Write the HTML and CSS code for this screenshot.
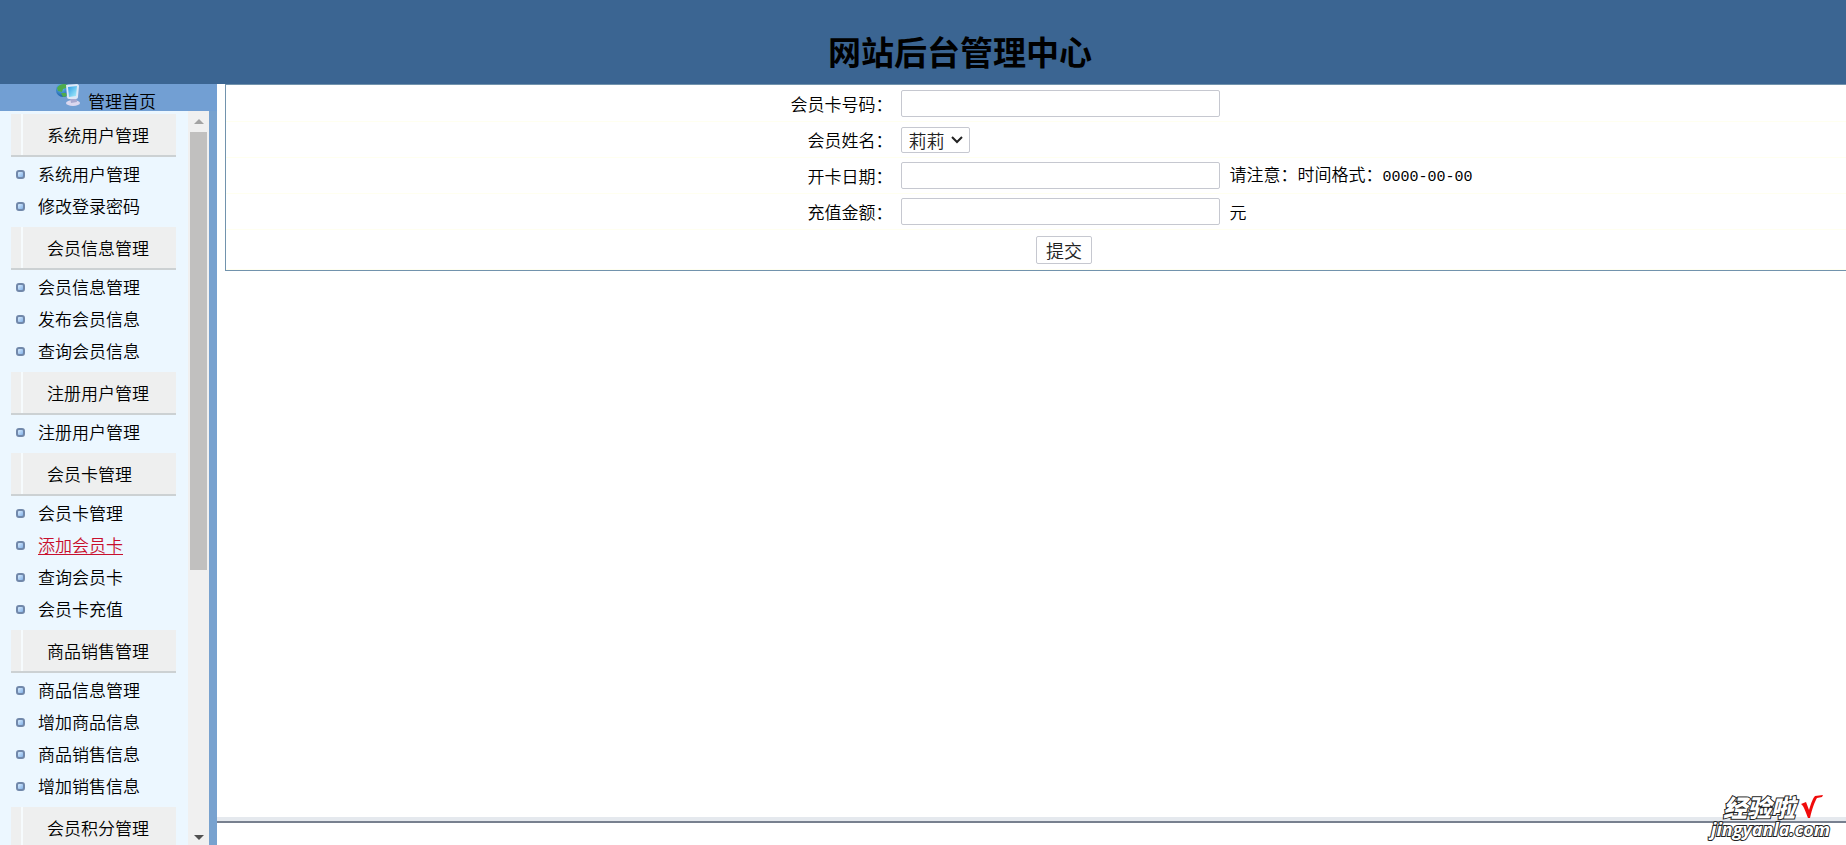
FILE: index.html
```html
<!DOCTYPE html>
<html lang="zh-CN">
<head>
<meta charset="utf-8">
<title>网站后台管理中心</title>
<link rel="stylesheet" href="styles.css">
</head>
<body>
<header class="banner"><h1>网站后台管理中心</h1></header>
<div class="frames">
  <aside class="sidebar">
    <a class="home" href="#">
      <svg class="home-icon" width="24" height="24" viewBox="0 0 24 24" aria-hidden="true">
        <defs>
          <linearGradient id="screen" x1="0" y1="0" x2="1" y2="1"><stop offset="0" stop-color="#2f9de6"/><stop offset="1" stop-color="#a8f0fb"/></linearGradient>
          <radialGradient id="globe" cx="0.4" cy="0.3" r="0.8"><stop offset="0" stop-color="#6fc5f5"/><stop offset="1" stop-color="#0d4f9e"/></radialGradient>
        </defs>
        <ellipse cx="17" cy="19" rx="7" ry="3" fill="#dcd8ef"/>
        <path d="M14 14l6-1 1 5-6 1z" fill="#a9a9cf"/>
        <circle cx="7" cy="6" r="7" fill="url(#globe)"/>
        <path d="M1 4c2-4 7-5 11-3l-2 3-3 1-1 3-4-1zM5 9l5 0 1 3-4 1z" fill="#4fab4c"/>
        <path d="M10 1l11-1c1 0 2 1 2 2l-1 11c0 1-1 2-2 2l-7 0c-1 0-2-1-2-2z" fill="#dce8f7"/>
        <path d="M12 3l9-1-1 10-7 1z" fill="url(#screen)"/>
      </svg>
      <span>管理首页</span>
    </a>
    <div class="scroll-area">
      <nav class="menu">
        <section><h2>系统用户管理</h2>
          <ul><li><a href="#">系统用户管理</a></li><li><a href="#">修改登录密码</a></li></ul></section>
        <section><h2>会员信息管理</h2>
          <ul><li><a href="#">会员信息管理</a></li><li><a href="#">发布会员信息</a></li><li><a href="#">查询会员信息</a></li></ul></section>
        <section><h2>注册用户管理</h2>
          <ul><li><a href="#">注册用户管理</a></li></ul></section>
        <section><h2>会员卡管理</h2>
          <ul><li><a href="#">会员卡管理</a></li><li><a class="active" href="#">添加会员卡</a></li><li><a href="#">查询会员卡</a></li><li><a href="#">会员卡充值</a></li></ul></section>
        <section><h2>商品销售管理</h2>
          <ul><li><a href="#">商品信息管理</a></li><li><a href="#">增加商品信息</a></li><li><a href="#">商品销售信息</a></li><li><a href="#">增加销售信息</a></li></ul></section>
        <section><h2>会员积分管理</h2></section>
      </nav>
      <div class="scrollbar" aria-hidden="true">
        <svg width="10" height="5" viewBox="0 0 10 5"><path d="M0 5L5 0l5 5z" fill="#a3a3a3"/></svg>
        <div class="track"><div class="thumb"></div></div>
        <svg width="10" height="5" viewBox="0 0 10 5"><path d="M0 0h10L5 5z" fill="#505050"/></svg>
      </div>
    </div>
  </aside>
  <main class="content">
    <form class="card-form">
      <div class="row"><label for="card-no">会员卡号码：</label><div class="field"><input id="card-no" type="text"></div></div>
      <div class="row"><label for="member">会员姓名：</label><div class="field"><div class="select-box"><select id="member"><option>莉莉</option></select><svg class="chevron" width="12" height="8" viewBox="0 0 12 8" aria-hidden="true"><path d="M1 1l5 5 5-5" fill="none" stroke="#222" stroke-width="2"/></svg></div></div></div>
      <div class="row"><label for="open-date">开卡日期：</label><div class="field"><input id="open-date" type="text"><span>请注意：时间格式：<span class="format">0000-00-00</span></span></div></div>
      <div class="row"><label for="amount">充值金额：</label><div class="field"><input id="amount" type="text"><span>元</span></div></div>
      <div class="row actions"><button type="submit">提交</button></div>
    </form>
    <div class="bottom-frame"></div>
  </main>
</div>
<div class="watermark">
  <div class="brand"><span>经验啦</span><svg width="24" height="24" viewBox="0 0 24 24" aria-hidden="true"><path d="M1 9l5-2 3 8C11 8 13 3 15 1l8-1-1 2-5 1C15 6 12 14 10 23L8 23C6 18 4 11 1 9z" fill="#f00b0b"/></svg></div>
  <div class="site">jingyanla.com</div>
</div>
</body>
</html>
```
FILE: styles.css
```css
*, *::before { box-sizing: border-box; }

body {
  margin: 0;
  height: 100vh;
  display: flex;
  flex-direction: column;
  overflow: hidden;
  background: #fff;
  color: #000;
  font: 350 17px/24px "Noto Sans CJK SC", sans-serif;
}

a { color: inherit; text-decoration: none; }

.banner {
  flex: none;
  height: 84px;
  padding: 27px 0 0 74px;
  background: #3b6592;
  text-align: center;
}

.banner h1 { margin: 0; font-size: 33px; line-height: 48px; font-weight: 700; }

.frames { flex: 1; min-height: 0; display: flex; }

.sidebar {
  flex: none;
  width: 217px;
  display: flex;
  flex-direction: column;
  border-right: 8px solid #78a2cf;
  background: #ecf7ff;
}

.home {
  flex: none;
  height: 27px;
  display: flex;
  gap: 8px;
  padding-left: 56px;
  margin-right: -8px;
  background: #729fd3;
  line-height: 33px;
}

.scroll-area { flex: 1; min-height: 0; display: flex; justify-content: space-between; }

.menu { width: 176px; padding: 3px 0 0 11px; overflow: hidden; }

.menu h2 {
  height: 43px;
  margin: 0;
  padding-left: 36px;
  border-bottom: 2px solid #ccd1d3;
  background: linear-gradient(90deg, #eeefef 10px, #f6fbfd 10px, #f6fbfd 12px, #eeefef 12px);
  font-size: 17px;
  font-weight: 350;
  line-height: 42px;
}

.menu ul { margin: 0; padding: 1px 0 5px; list-style: none; }

.menu li { height: 32px; display: flex; align-items: center; gap: 13px; padding-left: 5px; }

.menu li::before {
  content: "";
  width: 9px;
  height: 9px;
  border: 2px solid #7188aa;
  border-radius: 3px;
  background: linear-gradient(135deg, #d8ecff, #83b2e8);
}

.menu .active { color: #c8102e; text-decoration: underline; text-underline-offset: 2px; }

.scrollbar {
  width: 21px;
  display: flex;
  flex-direction: column;
  align-items: center;
  padding: 8px 2px 5px;
  background: #f0f0f0;
}

.scrollbar svg { flex: none; }

.track { flex: 1; align-self: stretch; padding: 8px 0; }

.thumb { height: 63%; background: #c1c0bf; }

.content { flex: 1; min-width: 0; display: flex; flex-direction: column; overflow: hidden; padding-left: 8px; }

.card-form { width: calc(100% + 57px); padding-top: 1px; border: 1px solid #7293ad; }

.row { min-height: 36px; display: flex; align-items: center; border-bottom: 1px solid #fffff0; }

.row label { width: 40%; padding-right: 4px; text-align: right; }

.field { display: flex; align-items: center; gap: 9px; padding-left: 5px; }

.format { font-family: "Liberation Mono", monospace; font-size: 15px; }

input, select, button {
  border: 1px solid #c6c8d0;
  border-radius: 2px;
  background: #fff;
  color: #222;
  font: 350 18px/24px "Noto Sans CJK SC", sans-serif;
}

input { width: 319px; height: 27px; padding: 0 4px; }

.select-box { display: grid; align-items: center; }

.select-box > * { grid-area: 1 / 1; }

select { width: 69px; height: 26px; padding: 0 6px; appearance: none; }

.chevron { justify-self: end; margin-right: 7px; pointer-events: none; }

.actions { min-height: 40px; justify-content: center; }

button { width: 56px; height: 28px; padding: 0; }

.bottom-frame {
  height: 28px;
  margin: auto 0 0 -8px;
  border-top: 4px solid #e5e9ee;
  background: linear-gradient(#78808f 2px, #fff 2px);
}

.watermark {
  position: absolute;
  right: 16px;
  bottom: 6px;
  color: #fff;
  font-weight: 900;
  -webkit-text-stroke: 2px #222;
  paint-order: stroke fill;
}

.brand { display: flex; align-items: center; justify-content: flex-end; gap: 5px; padding-right: 6px; font-size: 24px; font-style: italic; }

.site { font: italic 700 18px/20px "Open Sans", sans-serif; text-align: right; }
```
